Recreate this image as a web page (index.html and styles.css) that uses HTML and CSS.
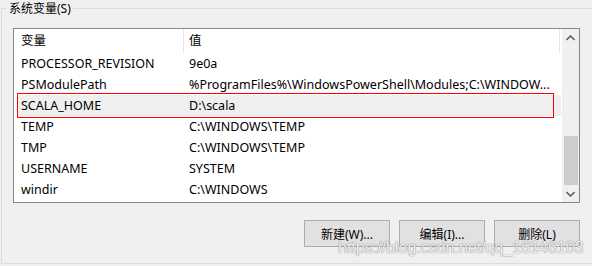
FILE: index.html
```html
<!doctype html>
<html>
<head>
	<title>系统变量</title>
	<meta charset="utf-8" />
	<link rel="stylesheet" href="styles.css">
</head>
<body>
	<fieldset class="group">
		<legend>系统变量(S)</legend>
		<div class="listbox">
			<div class="list">
				<div class="head">
					<span class="name">变量</span>
					<span class="value">值</span>
				</div>
				<div class="row"><span class="name">PROCESSOR_REVISION</span><span class="value">9e0a</span></div>
				<div class="row"><span class="name">PSModulePath</span><span class="value">%ProgramFiles%\WindowsPowerShell\Modules;C:\WINDOW...</span></div>
				<div class="row hover"><span class="name">SCALA_HOME</span><span class="value">D:\scala</span></div>
				<div class="row"><span class="name">TEMP</span><span class="value">C:\WINDOWS\TEMP</span></div>
				<div class="row"><span class="name">TMP</span><span class="value">C:\WINDOWS\TEMP</span></div>
				<div class="row"><span class="name">USERNAME</span><span class="value">SYSTEM</span></div>
				<div class="row"><span class="name">windir</span><span class="value">C:\WINDOWS</span></div>
			</div>
			<div class="scrollbar">
				<div class="arrow">
					<svg width="9" height="6" viewBox="0 0 9 6"><path d="M0.5 5 L4.5 1 L8.5 5" fill="none" stroke="#606060" stroke-width="1.6"/></svg>
				</div>
				<div class="track"><div class="thumb"></div></div>
				<div class="arrow">
					<svg width="9" height="6" viewBox="0 0 9 6"><path d="M0.5 1 L4.5 5 L8.5 1" fill="none" stroke="#606060" stroke-width="1.6"/></svg>
				</div>
			</div>
			<div class="mark"></div>
		</div>
		<div class="buttons">
			<button>新建(W)...</button>
			<button>编辑(I)...</button>
			<button>删除(L)</button>
		</div>
		<div class="watermark">https://blog.csdn.net/qq_16146103</div>
	</fieldset>
</body>
</html>
```

FILE: styles.css
```css
html {
	background-color: #f0f0f0;
}

body {
	margin: 0;
	overflow: hidden;
	height: 266px;
	font-family: "Noto Sans", "Noto Sans CJK SC", sans-serif;
	font-size: 12.5px;
	color: #000;
}

.group {
	position: relative;
	margin: 0 0 0 1px;
	width: 620px;
	height: 264px;
	padding: 11px 0 0 11px;
	border: 1px solid #dcdcdc;
	box-sizing: border-box;
}

.group legend {
	margin-left: -6px;
	padding: 0 2px;
	height: 17px;
	line-height: 17px;
	font-size: 12px;
}

.listbox {
	position: relative;
	display: flex;
	width: 567px;
	height: 175px;
	border: 1px solid #828790;
	background-color: #fff;
	box-sizing: border-box;
}

.list {
	width: 548px;
}

.head {
	display: flex;
	height: 24px;
	line-height: 24px;
}

.head .name {
	width: 162px;
	padding-left: 7px;
	border-right: 1px solid #e5e5e5;
}

.head .value {
	width: 370px;
	padding-left: 5px;
	border-right: 1px solid #e5e5e5;
}

.row {
	display: flex;
	height: 21px;
	line-height: 21px;
	margin: 0 1px 0 3px;
	white-space: nowrap;
}

.row .name {
	width: 166px;
	padding-left: 4px;
	box-sizing: border-box;
}

.row .value {
	padding-left: 6px;
}

.row.hover {
	background-color: #efefef;
}

.scrollbar {
	display: flex;
	flex-direction: column;
	width: 17px;
	background-color: #f0f0f0;
}

.arrow {
	display: flex;
	align-items: center;
	justify-content: center;
	height: 17px;
}

.track {
	flex: 1;
	padding: 90px 1px 0 2px;
}

.thumb {
	height: 49px;
	background-color: #cdcdcd;
}

.mark {
	position: absolute;
	left: 3px;
	top: 64px;
	width: 537px;
	height: 25px;
	outline: 1px solid #ff0000;
	outline-offset: -1px;
}

.buttons {
	display: flex;
	gap: 9px;
	width: 567px;
	justify-content: flex-end;
	margin-top: 17px;
}

.buttons button {
	width: 86px;
	height: 27px;
	padding: 0;
	font-family: inherit;
	font-size: 12px;
	color: #000;
	background-color: #e1e1e1;
	border: 1px solid #adadad;
}

.watermark {
	position: absolute;
	left: 336px;
	top: 222px;
	font-family: "Liberation Sans", sans-serif;
	font-size: 16px;
	color: rgba(255, 255, 255, 0.9);
	text-shadow: 0 0 1px rgba(90, 90, 90, 0.7), 0 0 1px rgba(90, 90, 90, 0.5);
}
```
